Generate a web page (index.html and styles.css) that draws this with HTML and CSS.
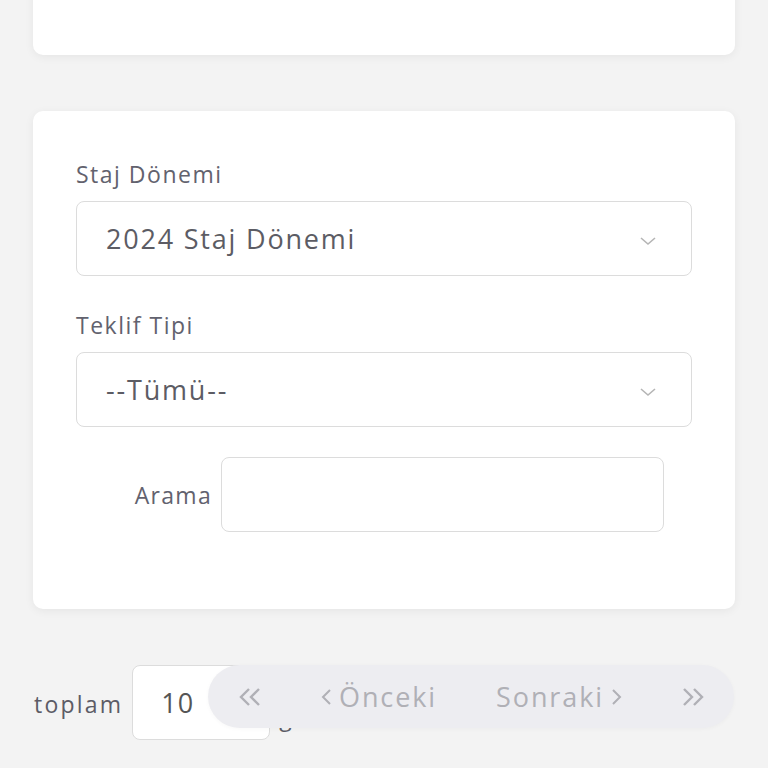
FILE: index.html
```html
<!DOCTYPE html>
<html lang="tr">
<head>
    <meta charset="UTF-8">
    <meta name="viewport" content="width=device-width, initial-scale=1.0">
    <title>Staj Teklifleri</title>
    <link rel="stylesheet" href="styles.css">
</head>
<body>
    <div class="card card-top"></div>

    <div class="card filter-card">
        <label class="field-label" for="donem">Staj Dönemi</label>
        <div class="select-box">
            <span>2024 Staj Dönemi</span>
            <svg class="chevron" width="18" height="10" viewBox="0 0 18 10"><path d="M2 2 L9 8 L16 2" fill="none" stroke="#b5b5b5" stroke-width="1.6"/></svg>
        </div>

        <label class="field-label" for="tip">Teklif Tipi</label>
        <div class="select-box">
            <span>--Tümü--</span>
            <svg class="chevron" width="18" height="10" viewBox="0 0 18 10"><path d="M2 2 L9 8 L16 2" fill="none" stroke="#b5b5b5" stroke-width="1.6"/></svg>
        </div>

        <div class="search-row">
            <label for="arama">Arama</label>
            <input type="text" id="arama">
        </div>
    </div>

    <div class="bottom-row">
        <span class="total-label">toplam</span>
        <input type="text" class="count-input" value="10">
        <span class="total-label">göster</span>

        <div class="pager">
            <span class="pager-item">
                <svg width="24" height="20" viewBox="0 0 24 20"><path d="M11 2 L3 10 L11 18 M21 2 L13 10 L21 18" fill="none" stroke="#b0b0b6" stroke-width="2.4"/></svg>
            </span>
            <span class="pager-item">
                <svg width="11" height="18" viewBox="0 0 11 18"><path d="M9 2 L2 9 L9 16" fill="none" stroke="#b0b0b6" stroke-width="2"/></svg>
                Önceki
            </span>
            <span class="pager-item">
                Sonraki
                <svg width="11" height="18" viewBox="0 0 11 18"><path d="M2 2 L9 9 L2 16" fill="none" stroke="#b0b0b6" stroke-width="2"/></svg>
            </span>
            <span class="pager-item">
                <svg width="24" height="20" viewBox="0 0 24 20"><path d="M3 2 L11 10 L3 18 M13 2 L21 10 L13 18" fill="none" stroke="#b0b0b6" stroke-width="2.4"/></svg>
            </span>
        </div>
    </div>
</body>
</html>
```

FILE: styles.css
```css
* {
    padding: 0;
    margin: 0;
    box-sizing: border-box;
}
body {
    background-color: #f3f3f3;
    font-family: "Open Sans", "Noto Sans", sans-serif;
    color: #5c5c66;
    padding: 0 33px;
    height: 768px;
    overflow: hidden;
}
.card {
    background-color: #fff;
    border-radius: 10px;
    box-shadow: 0 2px 10px rgba(0, 0, 0, 0.06);
}
.card-top {
    height: 66px;
    margin-top: -11px;
    border-top-left-radius: 0;
    border-top-right-radius: 0;
}
.filter-card {
    margin-top: 56px;
    height: 498px;
    padding: 48px 43px 0 43px;
}
.field-label {
    display: block;
    font-size: 23px;
    line-height: 30px;
    color: #62626e;
    margin-bottom: 12px;
    letter-spacing: 1.5px;
}
.select-box {
    display: flex;
    align-items: center;
    justify-content: space-between;
    height: 75px;
    border: 1px solid #dcdcdc;
    border-radius: 8px;
    padding: 0 34px 0 29px;
    font-size: 27px;
    letter-spacing: 1.8px;
    color: #5c5c64;
    margin-bottom: 34px;
}
.chevron {
    margin-top: 4px;
}
.search-row {
    display: flex;
    align-items: center;
    gap: 9px;
    margin-top: -4px;
}
.search-row label {
    width: 136px;
    text-align: right;
    font-size: 23px;
    letter-spacing: 1.3px;
    color: #62626e;
}
.search-row input {
    width: 443px;
    height: 75px;
    border: 1px solid #dcdcdc;
    border-radius: 8px;
    background: #fff;
}
.bottom-row {
    position: relative;
    display: flex;
    align-items: flex-start;
    margin-top: 56px;
    margin-left: -33px;
    padding-left: 34px;
}
.total-label {
    font-size: 23px;
    letter-spacing: 2.2px;
    color: #5c5c66;
    margin-top: 23px;
}
.count-input {
    width: 138px;
    height: 75px;
    margin: 0 9px;
    border: 1px solid #dcdcdc;
    border-radius: 8px;
    font-family: inherit;
    font-size: 27px;
    letter-spacing: 1px;
    color: #555;
    padding-left: 28px;
    background: #fff;
}
.bottom-row .total-label:nth-of-type(2) {
    margin-top: 36px;
}
.pager {
    position: absolute;
    left: 208px;
    top: 0;
    width: 526px;
    height: 63px;
    border-radius: 32px;
    background-color: #ededf1;
    display: flex;
    align-items: center;
    justify-content: space-between;
    padding: 0 29px 0 30px;
    box-shadow: 0 1px 4px rgba(0, 0, 0, 0.03);
}
.pager-item {
    display: flex;
    align-items: center;
    gap: 7px;
    font-size: 27px;
    letter-spacing: 1.9px;
    color: #b0b0b6;
}
```
